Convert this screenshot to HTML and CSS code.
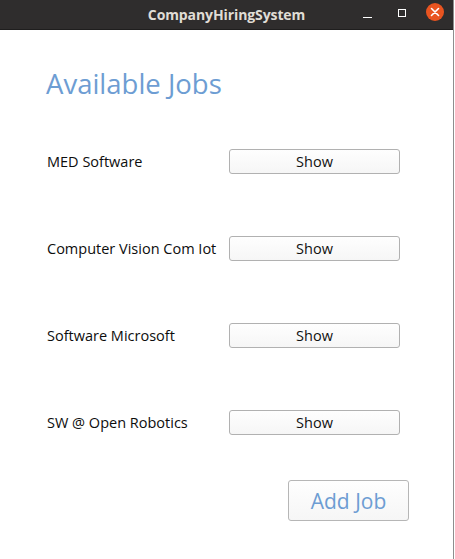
FILE: index.html
```html
<!DOCTYPE html>
<html>
<head>
<meta charset="utf-8">
<link rel="stylesheet" href="styles.css">
</head>
<body>
<div class="window">
  <header class="titlebar">
    <span></span>
    <span class="title">CompanyHiringSystem</span>
    <div class="controls">
      <span class="ctl-min"></span>
      <span class="ctl-max"></span>
      <span class="ctl-close">
        <svg width="18" height="18" viewBox="0 0 18 18"><path d="M5.5 5.5L12.5 12.5M12.5 5.5L5.5 12.5" stroke="#fff" stroke-width="1.6" stroke-linecap="round"/></svg>
      </span>
    </div>
  </header>
  <main class="content">
    <h1 class="heading">Available Jobs</h1>
    <div class="jobs">
      <div class="job"><span class="job-name">MED Software</span><button class="btn-show">Show</button></div>
      <div class="job"><span class="job-name">Computer Vision Com Iot</span><button class="btn-show">Show</button></div>
      <div class="job"><span class="job-name">Software Microsoft</span><button class="btn-show">Show</button></div>
      <div class="job"><span class="job-name">SW @ Open Robotics</span><button class="btn-show">Show</button></div>
    </div>
    <div class="footer">
      <button class="btn-add">Add Job</button>
    </div>
  </main>
</div>
</body>
</html>
```
FILE: styles.css
```css
html, body {
  margin: 0;
  padding: 0;
  background: #ffffff;
}
.window {
  width: 453px;
  height: 559px;
  border-right: 1px solid #8e8e8e;
  background: #ffffff;
  font-family: "Open Sans", "Noto Sans", sans-serif;
}
.titlebar {
  height: 29px;
  border-bottom: 1px solid #1f1e1e;
  background: #2f2d2d;
  display: grid;
  grid-template-columns: 1fr auto 1fr;
  align-items: center;
}
.title {
  color: #e0ddd6;
  font-weight: 700;
  font-size: 14px;
  letter-spacing: -0.1px;
}
.controls {
  justify-self: end;
  display: flex;
  align-items: center;
  padding-right: 9px;
}
.ctl-min {
  width: 9px;
  height: 1px;
  background: #ffffff;
  margin-top: 6px;
}
.ctl-max {
  width: 6px;
  height: 6px;
  border: 1px solid #ffffff;
  margin-left: 26px;
  margin-top: -3px;
}
.ctl-close {
  width: 18px;
  height: 18px;
  border-radius: 50%;
  background: #e95420;
  margin-left: 20px;
  margin-top: -5px;
  display: flex;
}
.content {
  padding: 36px 0 0 46px;
}
.heading {
  margin: 0;
  font-weight: 400;
  font-size: 27.5px;
  line-height: 36px;
  color: #6d9dd3;
}
.jobs {
  margin-top: 16px;
  display: grid;
  grid-auto-rows: 87px;
  width: 354px;
}
.job {
  display: grid;
  grid-template-columns: 183px 171px;
  align-items: center;
}
.job-name {
  font-size: 14.5px;
  color: #0d0d0d;
  padding-left: 1px;
}
.btn-show {
  height: 25px;
  border: 1px solid #b1b1b1;
  border-radius: 3px;
  background: linear-gradient(#fefefe, #f6f6f6);
  font-family: "Open Sans", "Noto Sans", sans-serif;
  font-size: 14.5px;
  color: #111111;
  padding: 0;
}
.footer {
  display: flex;
  justify-content: flex-end;
  width: 363px;
  margin-top: 14px;
}
.btn-add {
  width: 121px;
  height: 41px;
  border: 1px solid #b6b6b6;
  border-radius: 3px;
  background: linear-gradient(#fefefe, #f6f6f6);
  font-family: "Open Sans", "Noto Sans", sans-serif;
  font-size: 21px;
  color: #6d9dd3;
  padding: 0;
}
```
